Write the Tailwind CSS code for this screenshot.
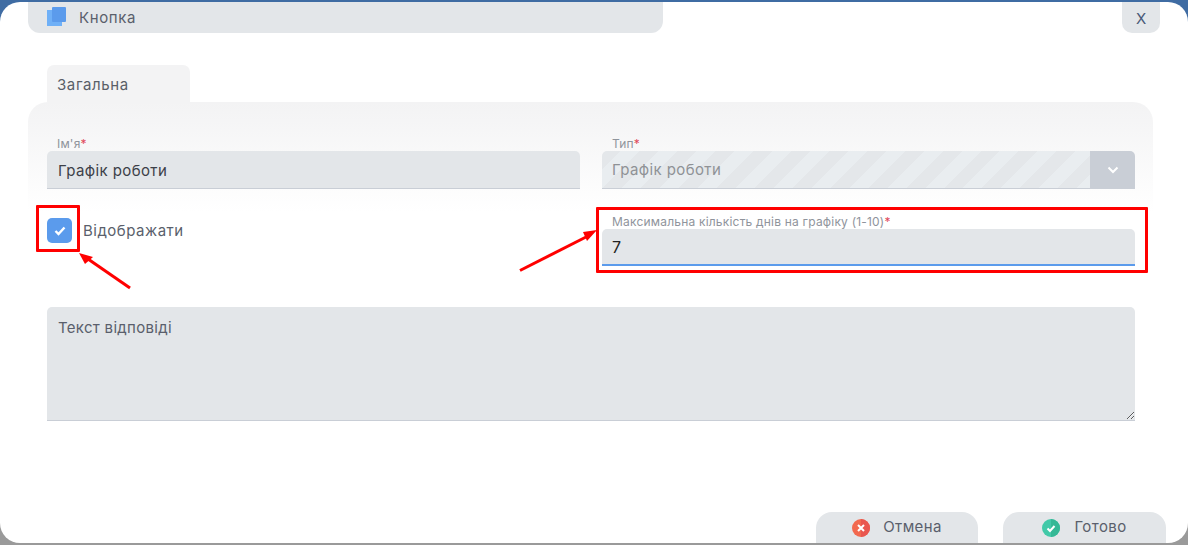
<!DOCTYPE html>
<html>
<head>
  <meta charset="UTF-8">
  <title>Кнопка</title>
  <script src="https://cdn.jsdelivr.net/npm/@tailwindcss/browser@4"></script>
</head>
<body class="bg-white">
<div class="relative w-[1188px] h-[545px] overflow-hidden bg-[#9a9a9a] font-['Inter','Noto_Sans',sans-serif] text-[#4a4f5a]">
  <div class="absolute inset-x-0 top-0 h-[60px] bg-[#3f6ca3]"></div>

  <!-- вікно -->
  <div class="relative h-[543px] pt-[2px]">
    <div class="h-[541px] bg-white rounded-[20px] flex flex-col">

      <!-- шапка -->
      <div class="flex justify-between px-[28px] h-[31px] shrink-0">
        <div class="w-[635px] bg-[#e3e6e9] rounded-b-[12px] flex items-center pl-[19px]">
          <svg width="20" height="20" viewBox="0 0 20 20" class="mr-[12px] -mt-[1px]">
            <rect x="0" y="3" width="15" height="16" fill="#6fb0f7"/>
            <rect x="5" y="0" width="14" height="15" rx="1" fill="#5b9bec"/>
          </svg>
          <span class="pt-[2px] text-[15px] tracking-[0.6px] text-[#5a5f6c]">Кнопка</span>
        </div>
        <div class="w-[38px] bg-[#e3e6e9] rounded-b-[10px] flex items-center justify-center text-[15px] text-[#4a5a78] pt-[3px]">X</div>
      </div>

      <!-- вкладка -->
      <div class="mt-[32px] ml-[47px] w-[143px] h-[37px] bg-[#f3f3f4] rounded-t-[7px] flex items-center pl-[10px] pt-[3px] text-[15px] tracking-[0.6px] text-[#5a5f68] shrink-0">Загальна</div>

      <!-- форма -->
      <div class="mx-[28px] w-[1125px] pt-[34px] px-[19px] rounded-t-[20px] bg-gradient-to-b from-[#f3f3f4] to-white to-[110px]">
        <div class="grid grid-cols-[533px_533px] gap-x-[22px]">
          <div class="h-[53px]">
            <div class="text-[12px] leading-[15px] tracking-[0.2px] text-[#8f949c] pl-[10px]">Ім'я<span class="text-[#e0485a]">*</span></div>
            <input value="Графік роботи" class="w-full h-[38px] px-[11px] pt-[2px] bg-[#e3e6e9] rounded-t-[5px] border-b border-[#c9ced6] text-[15px] tracking-[0.4px] text-[#3c4048] outline-none">
          </div>
          <div class="h-[53px]">
            <div class="text-[12px] leading-[15px] tracking-[0.2px] text-[#8f949c] pl-[10px]">Тип<span class="text-[#e0485a]">*</span></div>
            <div class="flex h-[38px] rounded-t-[5px] overflow-hidden border-b border-[#c9ced6]">
              <div class="flex-1 flex items-center px-[10px] pt-[2px] text-[15px] tracking-[0.4px] text-[#8f9296] bg-[repeating-linear-gradient(135deg,#e4e7ea_0,#e4e7ea_13.400px,#e9edf0_13.400px,#e9edf0_26.800px)]">Графік роботи</div>
              <div class="w-[45px] bg-[#c9ced6] flex items-center justify-center">
                <svg width="12" height="8" viewBox="0 0 12 8" fill="none" stroke="#fff" stroke-width="2"><path d="M1.500 1.500 6 6l4.500-4.500"/></svg>
              </div>
            </div>
          </div>
        </div>

        <div class="grid grid-cols-[533px_533px] gap-x-[22px] mt-[25px]">
          <div class="flex items-start">
            <div class="w-[25px] h-[25px] mt-[4px] rounded-[5px] bg-[#5b9bec] flex items-center justify-center">
              <svg width="12" height="10" viewBox="0 0 12 10" fill="none" stroke="#fff" stroke-width="2.400"><path d="M1.500 5 4.500 8 10.500 1.500"/></svg>
            </div>
            <span class="ml-[11px] mt-[8px] text-[15px] leading-[18px] tracking-[0.5px] text-[#5a5f6c]">Відображати</span>
          </div>
          <div>
            <div class="text-[12px] leading-[15px] tracking-[0.2px] text-[#8f949c] pl-[10px]">Максимальна кількість днів на графіку (1-10)<span class="text-[#e0485a]">*</span></div>
            <input value="7" class="w-full h-[37px] px-[10px] pt-[1px] bg-[#e3e6e9] rounded-t-[5px] border-b-2 border-[#5b9bec] text-[16px] text-[#222] outline-none">
          </div>
        </div>

        <textarea placeholder="Текст відповіді" class="block mt-[41px] w-[1088px] h-[114px] px-[11px] py-[10px] bg-[#e3e6e9] rounded-t-[5px] border-b border-[#c9ced6] text-[15px] tracking-[0.3px] placeholder:text-[#5a5f6c] outline-none"></textarea>
      </div>

      <!-- кнопки -->
      <div class="mt-auto flex justify-end gap-[25px] pr-[22px]">
        <div class="w-[162px] h-[31px] bg-[#e3e6e9] rounded-t-[16px] flex items-center justify-center gap-[13px] text-[15px] tracking-[0.4px] text-[#5a5f6c]">
          <svg width="18" height="18" viewBox="0 0 18 18">
            <circle cx="9" cy="9" r="9" fill="#f2694f"/>
            <path d="M9 0a9 9 0 0 1 0 18Z" fill="#e9574f"/>
            <path d="M6 6l6 6M12 6l-6 6" stroke="#fff" stroke-width="2" fill="none"/>
          </svg>
          Отмена
        </div>
        <div class="w-[163px] h-[31px] bg-[#e3e6e9] rounded-t-[16px] flex items-center justify-center gap-[14px] text-[15px] tracking-[0.4px] text-[#5a5f6c]">
          <svg width="18" height="18" viewBox="0 0 18 18">
            <circle cx="9" cy="9" r="9" fill="#42c9a8"/>
            <path d="M9 0a9 9 0 0 1 0 18Z" fill="#35b896"/>
            <path d="M5.500 9.500 8 12l4.500-5" stroke="#fff" stroke-width="2" fill="none"/>
          </svg>
          Готово
        </div>
      </div>
    </div>
  </div>

  <!-- червоні позначки поверх форми -->
  <div class="absolute left-[36px] top-[205px] w-[44px] h-[47px] border-[3px] border-[#f00] rounded-[1px]"></div>
  <div class="absolute left-[596px] top-[207px] w-[552px] h-[66px] border-[3px] border-[#f00] rounded-[1px]"></div>
  <svg class="absolute left-0 top-0 pointer-events-none" width="1188" height="545" fill="none">
    <path d="M130 288 88 259" stroke="#f00" stroke-width="3"/>
    <path d="M79 253 93 257 85 264Z" fill="#f00"/>
    <path d="M520 270.500 588 236" stroke="#f00" stroke-width="3"/>
    <path d="M597 230 583 232 587 241Z" fill="#f00"/>
  </svg>
</div>
</body>
</html>
